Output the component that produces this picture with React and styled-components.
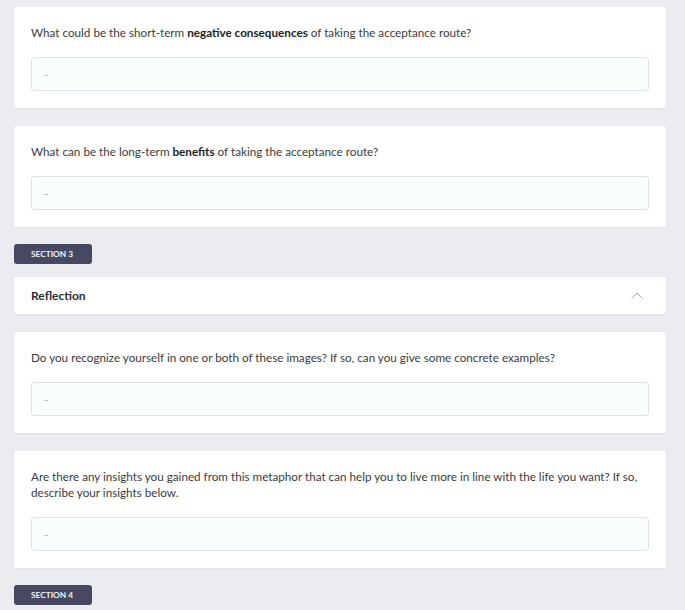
import React from 'react';
import styled, { createGlobalStyle } from 'styled-components';

const GlobalStyle = createGlobalStyle`
  html, body {
    margin: 0;
    padding: 0;
    background: #ebecf0;
    font-family: Lato, "Open Sans", sans-serif;
  }
`;

const Page = styled.div`
  display: flex;
  flex-direction: column;
  padding: 7px 19px 0 14px;
  gap: 18px;
`;

const Card = styled.div`
  background: #fff;
  border-radius: 3px;
  box-shadow: 0 1px 3px rgba(0, 0, 0, 0.05);
  padding: 17px;
  display: flex;
  flex-direction: column;
  gap: 17px;
`;

const Question = styled.p`
  margin: 0;
  font-size: 11.7px;
  line-height: 16px;
  color: #3b3b40;
  b {
    font-weight: 700;
    color: #222;
  }
`;

const Answer = styled.div`
  height: 34px;
  box-sizing: border-box;
  border: 1px solid #dde0e4;
  border-radius: 3px;
  background: #fafdfe;
  display: flex;
  align-items: center;
  padding-left: 11px;
  color: #b8b8bc;
  font-size: 11px;
`;

const SectionTag = styled.div`
  align-self: flex-start;
  width: 78px;
  height: 20px;
  box-sizing: border-box;
  background: #474963;
  color: #f2f2f6;
  border-radius: 3px;
  font-size: 8.3px;
  font-weight: 700;
  display: flex;
  align-items: center;
  padding-left: 17px;
  margin: ${p => p.$mt || 0}px 0 ${p => p.$mb || 0}px;
`;

const Header = styled.div`
  background: #fff;
  border-radius: 3px;
  box-shadow: 0 1px 3px rgba(0, 0, 0, 0.05);
  height: 37px;
  display: flex;
  align-items: center;
  justify-content: space-between;
  padding: 0 23px 0 17px;
`;

const HeaderTitle = styled.span`
  font-size: 12px;
  font-weight: 700;
  color: #2a2a30;
`;

const Chevron = () => (
  <svg width="12" height="7" viewBox="0 0 12 7" fill="none">
    <path d="M0.5 6.5 L6 1 L11.5 6.5" stroke="#a9a9ae" strokeWidth="1" />
  </svg>
);

const QuestionCard = ({ children }) => (
  <Card>
    <Question>{children}</Question>
    <Answer>–</Answer>
  </Card>
);

export default function App() {
  return (
    <>
      <GlobalStyle />
      <Page>
        <QuestionCard>
          What could be the short-term <b>negative consequences</b> of taking the acceptance route?
        </QuestionCard>
        <QuestionCard>
          What can be the long-term <b>benefits</b> of taking the acceptance route?
        </QuestionCard>
        <SectionTag $mt={-1} $mb={-5}>SECTION 3</SectionTag>
        <Header>
          <HeaderTitle>Reflection</HeaderTitle>
          <Chevron />
        </Header>
        <QuestionCard>
          Do you recognize yourself in one or both of these images? If so, can you give some concrete examples?
        </QuestionCard>
        <QuestionCard>
          Are there any insights you gained from this metaphor that can help you to live more in line with the life you want? If so, describe your insights below.
        </QuestionCard>
        <SectionTag $mt={-1}>SECTION 4</SectionTag>
      </Page>
    </>
  );
}
